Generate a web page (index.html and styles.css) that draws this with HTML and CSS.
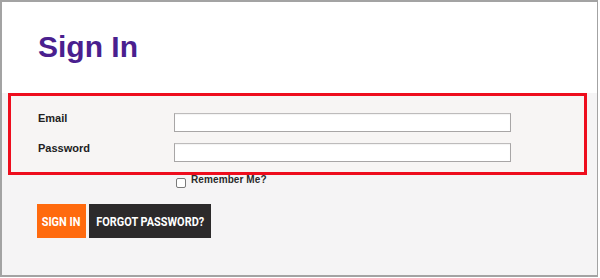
FILE: index.html
```
<!DOCTYPE html>
<html lang="en">
<head>
  <meta charset="UTF-8">
  <meta name="viewport" content="width=device-width, initial-scale=1">
  <title>Sign In</title>
  <link rel="stylesheet" href="styles.css">
</head>
<body>
  <div class="frame">
    <!-- Title -->
    <header class="page-head">
      <h1>Sign In</h1>
    </header>

    <!-- Login form -->
    <form class="login">
      <div class="fields">
        <label for="email">Email</label>
        <input type="text" id="email">
        <label for="password">Password</label>
        <input type="password" id="password">
      </div>

      <div class="remember">
        <input type="checkbox" id="remember">
        <label for="remember">Remember Me?</label>
      </div>

      <div class="actions">
        <button type="button" class="btn btn-primary"><span>SIGN IN</span></button>
        <button type="button" class="btn btn-dark"><span>FORGOT PASSWORD?</span></button>
      </div>
    </form>
  </div>
</body>
</html>
```
FILE: styles.css
```
/* Global Styles */
body {
  margin: 0;
  padding: 0;
  font-family: "Liberation Sans", Arial, sans-serif;
  background: #ffffff;
}
.frame {
  box-sizing: border-box;
  width: 598px;
  height: 277px;
  border: 2px solid #a3a3a3;
  border-right-width: 1px;
  background: #f5f4f5;
}
.page-head {
  background: #ffffff;
  height: 91px;
  padding: 0 0 0 36px;
  box-sizing: border-box;
  overflow: hidden;
}
.page-head h1 {
  margin: 28px 0 0 0;
  font-size: 30px;
  line-height: 34px;
  font-weight: bold;
  color: #4a1f8f;
}

/* Form box */
.fields {
  width: 579px;
  margin-left: 6px;
  box-sizing: border-box;
  border: 3px solid #ee0d1d;
  background: #f7f5f4;
  padding: 17px 0 10px 27px;
  display: grid;
  grid-template-columns: 136px 337px;
  row-gap: 11px;
}
.fields label {
  font-size: 11px;
  line-height: 13px;
  font-weight: bold;
  color: #222222;
  margin-top: -1px;
}
.fields input {
  box-sizing: border-box;
  height: 19px;
  margin: 0;
  border: 1px solid #a8a6a6;
  border-top-color: #bdbbbb;
  background: #ffffff;
  box-shadow: inset 0 1px 1px rgba(0,0,0,0.05);
}

.remember {
  display: flex;
  align-items: flex-start;
  padding-left: 174px;
  height: 29px;
}
.remember input {
  appearance: none;
  -webkit-appearance: none;
  width: 10px;
  height: 10px;
  margin: 3px 5px 0 0;
  border: 1px solid #7a7a7a;
  border-radius: 2px;
  background: #ffffff;
}
.remember label {
  font-size: 10px;
  line-height: 12px;
  font-weight: bold;
  color: #2a2a2a;
  letter-spacing: 0.1px;
  margin-top: -1px;
}

.actions {
  display: flex;
  gap: 3px;
  padding-left: 35px;
}
.btn {
  height: 34px;
  border: none;
  margin: 0;
  padding: 0;
  color: #ffffff;
  font-family: Roboto, "Liberation Sans", Arial, sans-serif;
  font-size: 13px;
  font-weight: bold;
  white-space: nowrap;
  display: flex;
  align-items: center;
  justify-content: center;
}
.btn span {
  display: inline-block;
  transform: scaleX(0.84);
}
.btn-primary {
  width: 49px;
  background: #ff6a0e;
}
.btn-dark {
  width: 122px;
  background: #2c2a2b;
}
```
